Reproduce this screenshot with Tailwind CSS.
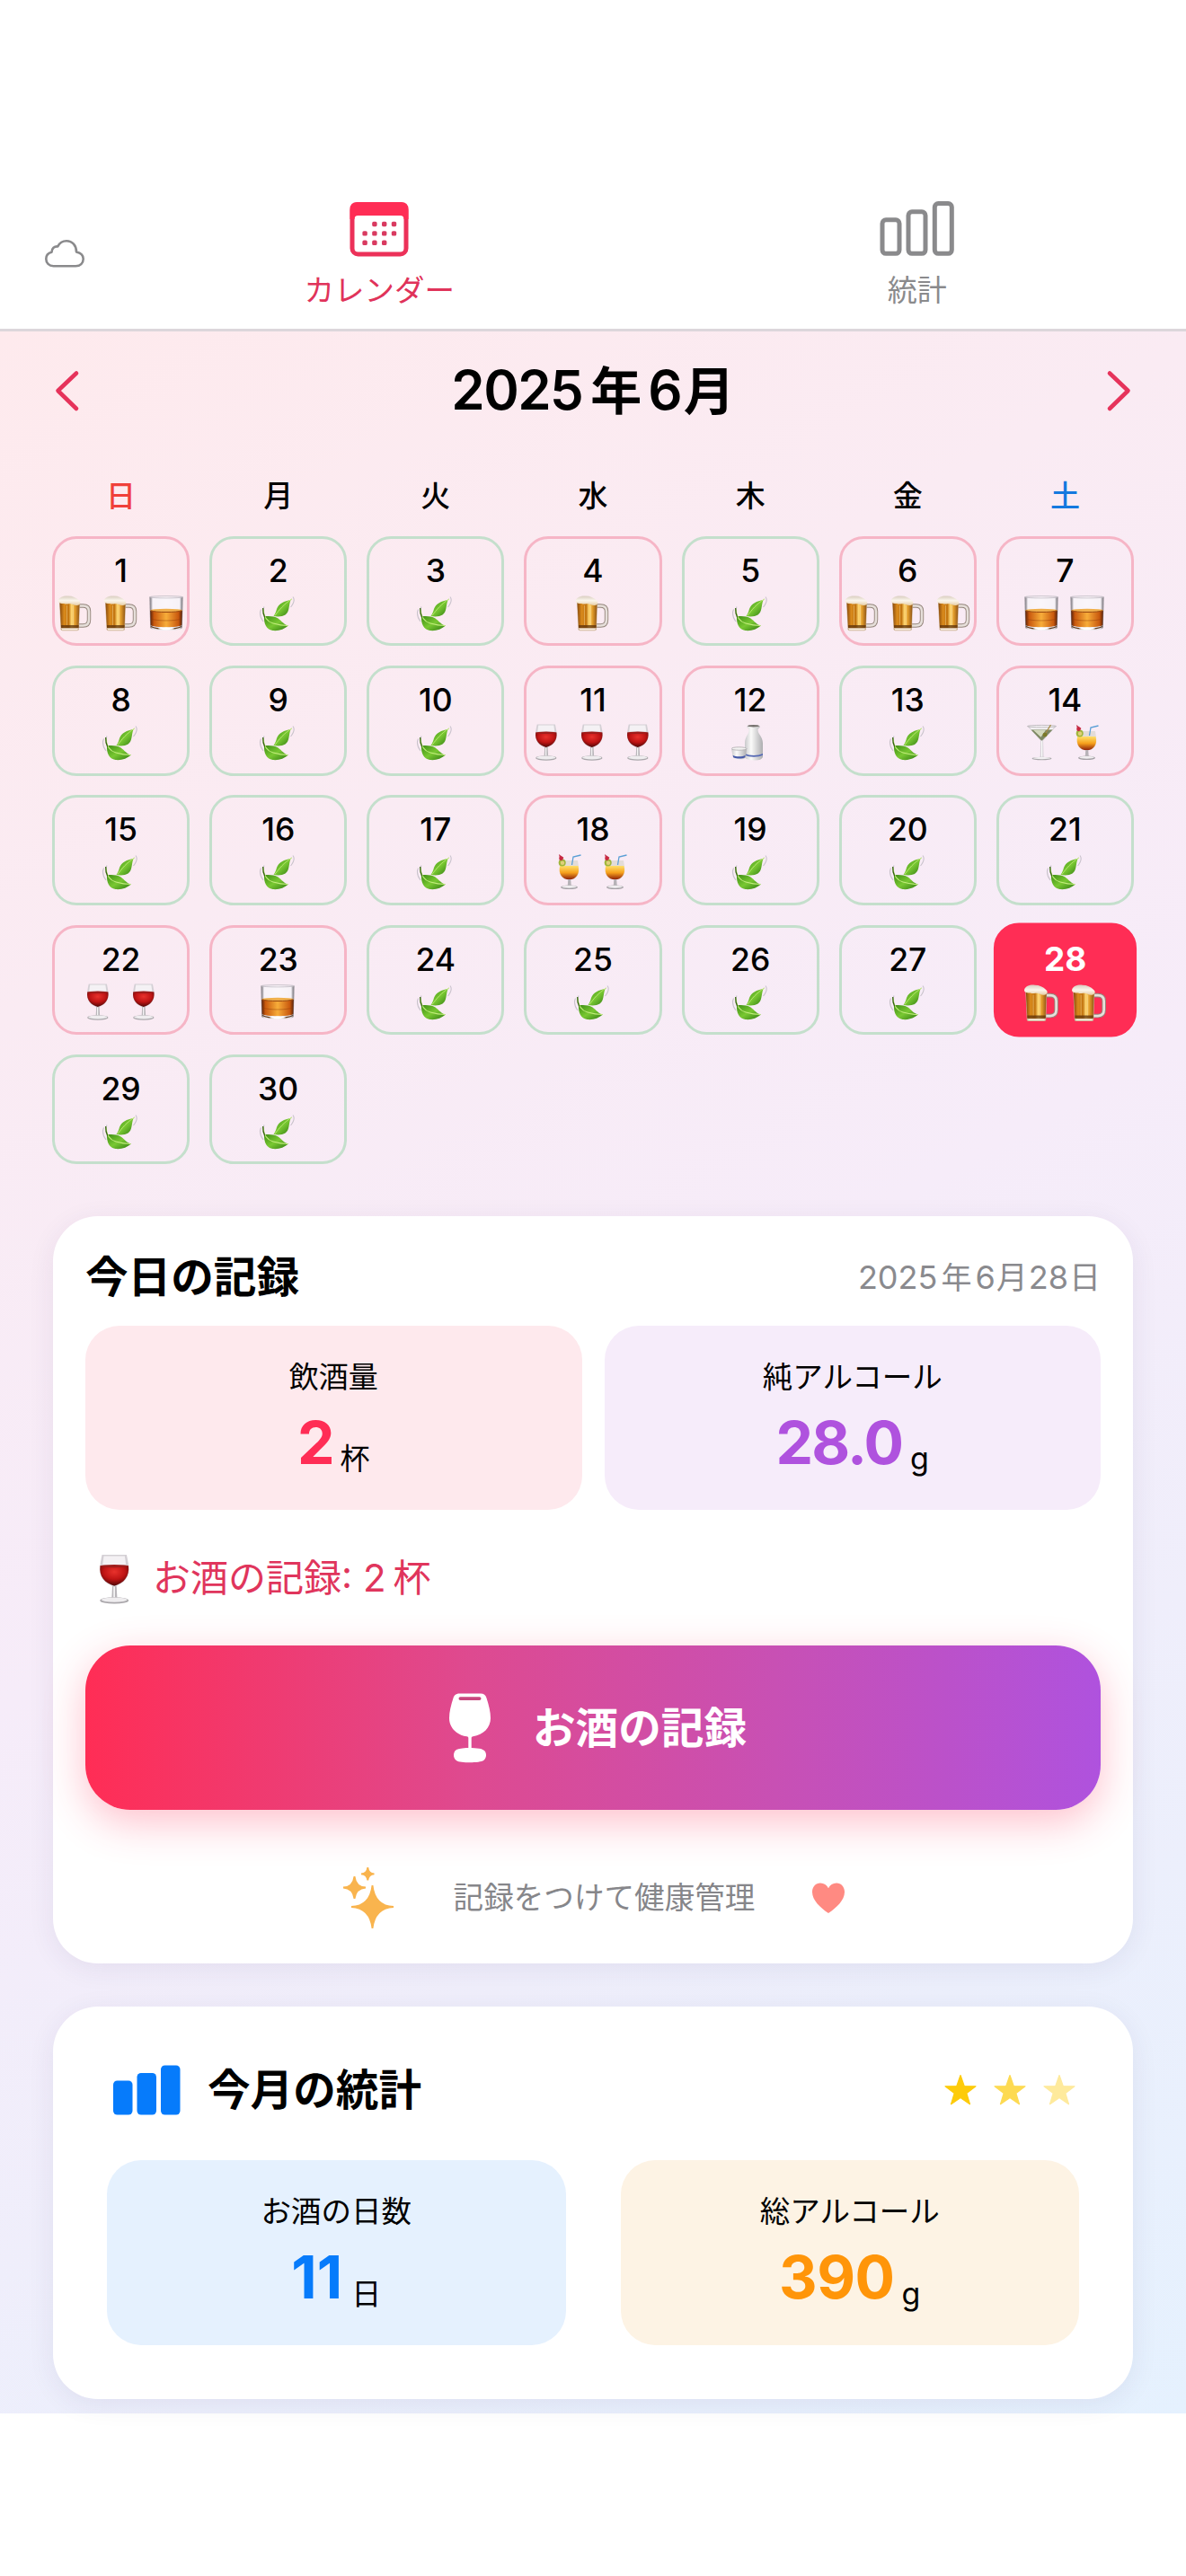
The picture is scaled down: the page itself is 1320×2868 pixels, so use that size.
<!DOCTYPE html>
<html lang="ja">
<head>
<meta charset="utf-8">
<title>カレンダー</title>
<script src="https://cdn.jsdelivr.net/npm/@tailwindcss/browser@4"></script>
</head>
<body class="bg-white">
<svg width="0" height="0" class="absolute" aria-hidden="true">
  <defs>
    <linearGradient id="beerG" x1="0" x2="1" y1="0" y2="0"><stop offset="0" stop-color="#8a4a0c"/><stop offset=".22" stop-color="#d98a1c"/><stop offset=".45" stop-color="#c2740f"/><stop offset=".6" stop-color="#ffd873"/><stop offset=".78" stop-color="#e09a2a"/><stop offset="1" stop-color="#8e5415"/></linearGradient>
    <linearGradient id="foamG" x1="0" x2="0" y1="0" y2="1"><stop offset="0" stop-color="#d9cdbf"/><stop offset=".5" stop-color="#fbf6ec"/><stop offset="1" stop-color="#e6cda6"/></linearGradient>
    <linearGradient id="whiskyG" x1="0" x2="1" y1="0" y2="0"><stop offset="0" stop-color="#5a2008"/><stop offset=".12" stop-color="#c9590e"/><stop offset=".5" stop-color="#f7ad3a"/><stop offset=".88" stop-color="#c9590e"/><stop offset="1" stop-color="#5a2008"/></linearGradient>
    <linearGradient id="glassG" x1="0" x2="1" y1="0" y2="0"><stop offset="0" stop-color="#77747a"/><stop offset=".1" stop-color="#e4e0e6"/><stop offset=".5" stop-color="#f7f4f8"/><stop offset=".9" stop-color="#dedae0"/><stop offset="1" stop-color="#77747a"/></linearGradient>
    <radialGradient id="wineG" cx=".5" cy=".3" r=".75"><stop offset="0" stop-color="#e8322c"/><stop offset=".5" stop-color="#bf1414"/><stop offset="1" stop-color="#3a0505"/></radialGradient>
    <linearGradient id="leafG" x1="0" x2="1" y1="0" y2="1"><stop offset="0" stop-color="#3f8f14"/><stop offset=".5" stop-color="#79c832"/><stop offset="1" stop-color="#2f7a12"/></linearGradient>
    <linearGradient id="sakeG" x1="0" x2="1" y1="0" y2="0"><stop offset="0" stop-color="#c9c9cb"/><stop offset=".35" stop-color="#fbfbfa"/><stop offset="1" stop-color="#adadb0"/></linearGradient>
    <linearGradient id="tropicG" x1="0" x2="0" y1="0" y2="1"><stop offset="0" stop-color="#ffe06a"/><stop offset=".5" stop-color="#f6a01c"/><stop offset="1" stop-color="#8c1f0a"/></linearGradient>
  </defs>
  <symbol id="beer" viewBox="0 0 42 42">
    <path d="M26 13.500h4.500c4.500 0 6.500 2 6.500 6v9.500c0 4-2 6.500-6.500 6.500H26" fill="none" stroke="#94857b" stroke-width="4.400"/>
    <path d="M26 13.500h4.500c4.500 0 6.500 2 6.500 6v9.500c0 4-2 6.500-6.500 6.500H26" fill="none" stroke="#e6dfda" stroke-width="2.600"/>
    <path d="M4 9h23L26 39.500q-.2 1.800-2 1.800H7.500q-1.800 0-2-1.800z" fill="#cdb498"/>
    <path d="M4.500 10h22l-1 28H6z" fill="url(#beerG)"/>
    <path d="M6 35h19.600v3H6z" fill="#5e330c" opacity=".75"/>
    <path d="M7 39.700h17.500" stroke="#fff7e8" stroke-width="1.200"/>
    <path d="M12.500 13v22M19.500 13v22" stroke="#fff0c0" stroke-width=".7" opacity=".5"/>
    <path d="M2.800 7.500C4 3.500 9 2 14 2.500c5 0 9 2 12 5 3 2.500.5 5.500-2 5.500-3 .5-5-1.500-7.500-1.800-3.500-.2-5 1-7-.2C6 11 2.500 10.500 2.800 7.500z" fill="url(#foamG)"/>
  </symbol>
  <symbol id="whisky" viewBox="0 0 42 42">
    <path d="M2.500 3.500h37l-.6 34c-.2 2-6 3.500-17.900 3.500S3.300 39.500 3.100 37.500z" fill="url(#glassG)"/>
    <path d="M5.500 4.500h31v14h-31z" fill="#faf6fa" opacity=".85"/>
    <path d="M3.200 18.500h35.600l-.5 16.500c-3 3-31.600 3-34.600 0z" fill="url(#whiskyG)"/>
    <ellipse cx="21" cy="18.600" rx="17.700" ry="1.900" fill="#f0b04c"/>
    <path d="M4 18.800c5 2.300 29 2.300 34 0" stroke="#8c3b0a" stroke-width=".9" fill="none"/>
    <path d="M4 28c7 2.600 27 2.600 34 0" stroke="#8c3b0a" stroke-width=".8" fill="none" opacity=".55"/>
    <path d="M4 36.500c7 3.700 27 3.700 34 0" stroke="#5f3d22" stroke-width="1.400" fill="none"/>
    <ellipse cx="21" cy="38.800" rx="9" ry="1.300" fill="#fff"/>
    <ellipse cx="21" cy="3.700" rx="18.300" ry="1.200" fill="none" stroke="#c3bec5" stroke-width=".8"/>
  </symbol>
  <symbol id="wine" viewBox="0 0 42 42">
    <path d="M10.700 1.500h20.200c.8 4 1.800 8 1.800 12 0 7.500-4.800 12-11.900 14C13.500 25.500 9 21 9 13.500c0-4 .9-8 1.700-12z" fill="#d4d0d5"/>
    <path d="M12.200 2.500h17.200l.9 7H11.200z" fill="#f4f1f4"/>
    <path d="M9.200 10.500h23.200c1.200 8.500-4 14.500-11.600 16.500C13.200 25 7.900 19 9.200 10.500z" fill="url(#wineG)"/>
    <ellipse cx="20.800" cy="10.800" rx="11.500" ry="1.200" fill="#a01d1b"/>
    <path d="M19.200 27h3.400l.6 11h-4.600z" fill="#b9b6ba"/>
    <path d="M20.700 27.500v10" stroke="#fff" stroke-width="1.100"/>
    <ellipse cx="20.800" cy="39" rx="11.700" ry="2.700" fill="#aaa7ab"/>
    <ellipse cx="20.800" cy="38.400" rx="10.600" ry="2" fill="#efedef"/>
  </symbol>
  <symbol id="leaf" viewBox="0 0 42 42">
    <path d="M38 3.500c2 2.500 1 7-2.500 11.500M2.500 17.500c-1.800 4-.5 9.500 2.500 13.500M6 14.500c-1 2-1 3.500-.5 5.500" fill="none" stroke="#c9c3cc" stroke-width="1.100"/>
    <path d="M35.500 7C28.500 8 22 11 20 17c-.8 2.500-1.300 5-3.500 8 5 1 10 .5 13-1.500 5-3.500 3.500-9.500 6-16.500z" fill="url(#leafG)"/>
    <path d="M18 24.300c5-6.500 9.500-12.500 19-18.500" fill="none" stroke="#b7e572" stroke-width="1"/>
    <path d="M6 25.500C10.500 24.500 17 25 21.500 27.500c4 2.800 7 7.500 11.500 8-4.500 4-11 6.300-17.500 5.500C8.500 40 5.500 33 6 25.500z" fill="url(#leafG)"/>
    <path d="M5 17.500c.5 7 3.500 13.500 11 15.500 5 1.500 10 2.500 16.500 2.500" fill="none" stroke="#c2ec7c" stroke-width="1.100"/>
    <path d="M4.700 16c-.2 4 .5 7.500 2 10.500" fill="none" stroke="#35650f" stroke-width="1.300"/>
  </symbol>
  <symbol id="sake" viewBox="0 0 42 42">
    <path d="M17 3.500q7.500-2.500 15 0c.5 1.500-2.500 2.500-2.500 4 0 5 5.500 7.500 5.500 15v15.500q-2 4-10 3.500-8-.5-10-3V22.500C15 15 19.700 12.500 19.700 7.500c0-1.500-3-2.500-2.700-4z" fill="url(#sakeG)"/>
    <ellipse cx="24.500" cy="3.200" rx="6.500" ry="1.300" fill="#77726f"/>
    <path d="M15 34c5 2.500 15 2.500 20 0v1.800c-5 2.500-15 2.500-20 0z" fill="#5468b4"/>
    <path d="M0 28.500h17l-1.200 9.500q-1 2.500-7 2.500t-7-2.500z" fill="url(#sakeG)"/>
    <ellipse cx="8.500" cy="28.500" rx="8.400" ry="1.700" fill="#f4f3f2" stroke="#a3a0a3" stroke-width=".7"/>
    <path d="M1.600 35.800c3 2 11 2 14 0l-.4 2.400c-3 1.800-10 1.800-13 0z" fill="#4559a8"/>
  </symbol>
  <symbol id="martini" viewBox="0 0 42 42">
    <path d="M5.500 3.500h32L23 19.500l.5 19h-3.800l.5-19z" fill="#d3cfd4"/>
    <path d="M7.500 4h28L33 7.500H10z" fill="#f4f1f4"/>
    <path d="M9.500 7.500h24L22 19.200h-1.200z" fill="#7d8762"/>
    <path d="M12 7.800H26l-5.500 8z" fill="#d3d8bd"/>
    <ellipse cx="21.500" cy="3.600" rx="16" ry="1.200" fill="#f5f3f5" stroke="#aaa6ab" stroke-width=".7"/>
    <path d="M31.500 2l-8 13" stroke="#a68a43" stroke-width="1.300"/>
    <ellipse cx="25" cy="13" rx="2.500" ry="2.200" fill="#7b7a28"/>
    <path d="M21.600 20v18" stroke="#fff" stroke-width="1.200"/>
    <ellipse cx="21.500" cy="39.500" rx="11" ry="1.800" fill="#aaa7ab"/><ellipse cx="21.500" cy="39" rx="9.700" ry="1.200" fill="#f2f0f2"/>
  </symbol>
  <symbol id="tropical" viewBox="0 0 42 42">
    <path d="M10.500 9H30c.5 4 1.300 7 1.300 11 0 6.500-4.300 10.500-10.800 10.500S9.700 26.500 9.700 20c0-4 .4-7 .8-11z" fill="#e3dcd8"/>
    <path d="M10.200 15h20.300c2.200 9-2.500 15.300-10 15.300S8 24 10.200 15z" fill="url(#tropicG)"/>
    <path d="M19.300 30h2.900l.5 7h-3.900z" fill="#b6b2b7"/>
    <ellipse cx="20.500" cy="38.800" rx="9.500" ry="2.300" fill="#a5a1a6"/><ellipse cx="20.500" cy="38.300" rx="8.200" ry="1.500" fill="#f0eef0"/>
    <path d="M23.500 14l1.500-9 8.500-2" fill="none" stroke="#5a9fd6" stroke-width="1.300"/>
    <circle cx="12.700" cy="11.500" r="4" fill="#9fb63c"/><circle cx="13" cy="11.800" r="2.200" fill="#dfd07a"/>
    <path d="M9 2l5.500 4-4 3z" fill="#c3344d"/><circle cx="11.500" cy="6.800" r="2.300" fill="#c8283f"/>
  </symbol>
</svg>

<div class="flex h-[2868px] w-[1320px] flex-col bg-white font-['Inter','Noto_Sans_CJK_JP',sans-serif] text-black">
  <header class="flex h-[369px] shrink-0 border-b-[3px] border-[#dcd6db] pt-[224px]">
    <div class="w-[123px] pt-[41px] pl-[48px]">
      <svg width="48" height="34" viewBox="0 0 48 34" fill="none" stroke="#8a8a8c" stroke-width="2.600" stroke-linejoin="round"><path d="M11.500 31.200C6.500 31.200 3.300 27.800 3.300 23.300c0-4 2.400-6.800 6.200-7.600C9.700 11.500 12.500 9 16.300 9.400 18.300 5.500 21.800 3.300 26 3.300c6.500 0 11 5 11 12.200 4.800 1 7.700 3.800 7.700 7.800 0 4.700-3.400 7.900-8.500 7.900z"/></svg>
    </div>
    <div class="flex flex-1 flex-col items-center text-[#e0335a]">
      <svg width="66" height="62" viewBox="0 0 66 62">
        <rect x="3" y="3.500" width="60" height="55.500" rx="6.500" fill="#fff" stroke="#ec3159" stroke-width="5"/>
        <path d="M.5 20V9q0-8 8-8h49q8 0 8 8v11h-5q0-4-4-4h-47q-4 0-4 4z" fill="#ff2d55"/>
        <g fill="#d93a60"><rect x="25.200" y="22.800" width="5.400" height="5.400" rx="1.600"/><rect x="36" y="22.800" width="5.400" height="5.400" rx="1.600"/><rect x="46.800" y="22.800" width="5.400" height="5.400" rx="1.600"/><rect x="14.400" y="33.200" width="5.400" height="5.400" rx="1.600"/><rect x="25.200" y="33.200" width="5.400" height="5.400" rx="1.600"/><rect x="36" y="33.200" width="5.400" height="5.400" rx="1.600"/><rect x="46.800" y="33.200" width="5.400" height="5.400" rx="1.600"/><rect x="14.400" y="43.600" width="5.400" height="5.400" rx="1.600"/><rect x="25.200" y="43.600" width="5.400" height="5.400" rx="1.600"/><rect x="36" y="43.600" width="5.400" height="5.400" rx="1.600"/></g>
      </svg>
      <span class="mt-[12px] text-[33.500px] leading-[50px]">カレンダー</span>
    </div>
    <div class="flex flex-1 flex-col items-center text-[#8a8a8c]">
      <svg width="84" height="62" viewBox="0 0 84 62" fill="none" stroke="#8a8a8c" stroke-width="5"><rect x="3" y="20.800" width="19" height="37.500" rx="4"/><rect x="32" y="11.800" width="19" height="46.500" rx="4"/><rect x="61.300" y="2.500" width="19" height="55.800" rx="4"/></svg>
      <span class="mt-[12px] text-[33px] leading-[50px]">統計</span>
    </div>
  </header>

  <main class="h-[2318px] shrink-0 bg-[linear-gradient(150.4deg,#feeaed_0%,#f6ecf9_50%,#e5f1fe_100%)] px-[59px]">
    <div class="flex h-[132px] items-center justify-between">
      <svg width="32" height="50" viewBox="0 0 32 50" fill="none" stroke="#e6335b" stroke-width="4.600" stroke-linecap="round" stroke-linejoin="round"><path d="M26 5.500L5.500 25 26 45"/></svg>
      <h1 class="text-[60px] leading-[80px] font-semibold"><span class="tracking-[-1.500px]">2025</span><span class="mr-[7px] ml-[9px] text-[57px]">年</span>6<span class="ml-[1px] text-[57px]">月</span></h1>
      <svg width="32" height="50" viewBox="0 0 32 50" fill="none" stroke="#e6335b" stroke-width="4.600" stroke-linecap="round" stroke-linejoin="round"><path d="M6 5.500L26.500 25 6 45"/></svg>
    </div>
    <div class="-mx-px grid h-[96px] grid-cols-7 gap-x-[22px] pt-[26px] text-center text-[33px] leading-[50px] font-medium">
      <span class="text-[#f0403a]">日</span><span>月</span><span>火</span><span>水</span><span>木</span><span>金</span><span class="text-[#1479df]">土</span>
    </div>
    <div id="days" class="-mx-px grid h-[757px] auto-rows-[122.4px] grid-cols-7 gap-x-[22px] gap-y-[21.800px]"></div>

    <section class="flex h-[832px] flex-col rounded-[50px] bg-white px-[36px] pt-[36px] shadow-[0_6px_30px_rgba(60,40,90,0.075)]">
      <div class="flex h-[64px] items-center justify-between">
        <h2 class="text-[47.600px] leading-[62px] font-bold">今日の記録</h2>
        <span class="text-[36px] leading-[62px] text-[#8a8a8e]">2025<span class="mx-[4px] text-[34px]">年</span>6<span class="mx-[1px] text-[35px]">月</span>28<span class="ml-[1px] text-[35px]">日</span></span>
      </div>
      <div class="mt-[22px] grid h-[205px] shrink-0 grid-cols-2 gap-[25px]">
        <div class="flex flex-col items-center rounded-[38px] bg-[#fee9ed] pt-[32px]">
          <span class="text-[33px] leading-[50px]">飲酒量</span>
          <div class="flex gap-[8px]"><b class="text-[66px] leading-[96px] font-bold tracking-[-2px] text-[#ff2d55]">2</b><span class="pt-[41px] text-[33px] leading-[50px]">杯</span></div>
        </div>
        <div class="flex flex-col items-center rounded-[38px] bg-[#f6ecfa] pt-[32px]">
          <span class="text-[33.500px] leading-[50px]">純アルコール</span>
          <div class="flex gap-[9px]"><b class="text-[66px] leading-[96px] font-bold tracking-[-1.800px] text-[#af52de]">28.0</b><span class="pt-[41px] text-[34px] leading-[50px]">g</span></div>
        </div>
      </div>
      <div class="mt-[46px] flex h-[60px] items-center pl-[4px]">
        <svg width="57" height="57" viewBox="0 0 42 42"><use href="#wine"/></svg>
        <span class="ml-[14px] text-[42px] leading-[60px] text-[#e0355c]">お酒の記録: 2<span class="ml-[8px]">杯</span></span>
      </div>
      <button class="mt-[45px] flex h-[183px] shrink-0 items-center justify-center gap-[45px] rounded-[50px] bg-[linear-gradient(90deg,#ff2d55_0%,#de4a90_38%,#c850b4_68%,#af52de_100%)] pl-[9px] text-white shadow-[0_14px_46px_rgba(255,45,85,0.300)]">
        <svg width="50" height="80" viewBox="0 0 50 80"><path d="M13 1.500h24q5 0 6.500 5C46 14 48 22 48 29c0 10.500-8 18.500-19.500 20.200-1.500.3-1.800.8-1.800 1.800v11c9.300.4 13.500 1 15.500 4.500 1.500 3 1 7-2 9.500-4 3-26.400 3-30.400 0-3-2.500-3.500-6.500-2-9.500 2-3.500 6.200-4.100 15.500-4.500V51c0-1-.3-1.500-1.800-1.800C10 47.500 2 39.500 2 29 2 22 4 14 6.500 6.500 8 1.500 13 1.500 13 1.500z" fill="#fff"/><rect x="12.500" y="5.200" width="25" height="3.800" rx="1.900" fill="#c9477f"/></svg>
        <span class="text-[47.600px] leading-[70px] font-bold">お酒の記録</span>
      </button>
      <div class="mt-[60px] flex h-[76px] items-center justify-center pl-[2px] text-[#86868a]">
        <svg class="mr-[66px]" width="58" height="70" viewBox="0 0 58 70" fill="#f9b44e"><path d="M33.500 21Q36 44 57 45 36 46 33.500 69 31 46 10 45 31 44 33.500 21zM13.500 11Q15 23 26 23.500 15 24 13.500 36 12 24 1 23.500 12 23 13.500 11zM28.300 1Q29 8 35.500 8.300 29 8.600 28.300 15.500 27.600 8.600 21 8.300 27.600 8 28.300 1z" stroke="#f9b44e" stroke-width="1.800"/></svg>
        <span class="text-[33.600px] leading-[50px]">記録をつけて健康管理</span>
        <svg class="ml-[63px]" width="38" height="36" viewBox="0 0 38 36"><path d="M19 35C10 29 1 20.500 1 11.500 1 5.500 5 1.500 10 1.500c4 0 7.200 2.200 9 5.800 1.800-3.600 5-5.800 9-5.800 5 0 9 4 9 10C37 20.500 28 29 19 35z" fill="#ff8a82"/></svg>
      </div>
    </section>

    <section class="mt-[48px] h-[437px] rounded-[50px] bg-white px-[60px] pt-[61px] shadow-[0_6px_30px_rgba(60,40,90,0.075)]">
      <div class="flex h-[64px] items-center pr-[3px] pl-[6px]">
        <svg width="78" height="58" viewBox="0 0 78 58" fill="#067bfb"><rect x="1" y="18.500" width="21.500" height="38" rx="4.500"/><rect x="27.500" y="10" width="21.500" height="46.500" rx="4.500"/><rect x="54" y="1.500" width="21.500" height="55" rx="4.500"/></svg>
        <h2 class="ml-[28px] text-[47.600px] leading-[62px] font-bold">今月の統計</h2>
        <div class="ml-auto flex gap-[17px]">
          <svg width="38" height="36" viewBox="0 0 38 36"><path id="star" d="M19 1.500l4.200 12 12.800.3-10.200 7.700 3.700 12.200L19 26.500 8.500 33.700 12.200 21.500 2 13.800l12.800-.3z" fill="#fdcb0a" stroke="#fdcb0a" stroke-width="1.200" stroke-linejoin="round"/></svg>
          <svg class="opacity-70" width="38" height="36" viewBox="0 0 38 36"><use href="#star"/></svg>
          <svg class="opacity-40" width="38" height="36" viewBox="0 0 38 36"><use href="#star"/></svg>
        </div>
      </div>
      <div class="mt-[46px] grid h-[206px] grid-cols-2 gap-[61px]">
        <div class="flex flex-col items-center rounded-[38px] bg-[#e5f1fe] pt-[32px]">
          <span class="text-[33.500px] leading-[50px]">お酒の日数</span>
          <div class="flex gap-[10px]"><b class="text-[66px] leading-[96px] font-bold text-[#067bfb]">11</b><span class="pt-[42px] text-[33px] leading-[50px]">日</span></div>
        </div>
        <div class="flex flex-col items-center rounded-[38px] bg-[#fdf3e4] pt-[32px]">
          <span class="text-[33.500px] leading-[50px]">総アルコール</span>
          <div class="flex gap-[8px]"><b class="text-[66px] leading-[96px] font-bold tracking-[-0.500px] text-[#ff9509]">390</b><span class="pt-[42px] text-[34px] leading-[50px]">g</span></div>
        </div>
      </div>
    </section>
  </main>
</div>
<script>
  const drinks = {1:['beer','beer','whisky'],4:['beer'],6:['beer','beer','beer'],7:['whisky','whisky'],11:['wine','wine','wine'],12:['sake'],14:['martini','tropical'],18:['tropical','tropical'],22:['wine','wine'],23:['whisky'],28:['beer','beer']};
  const base = 'flex flex-col items-center rounded-[27px] border-[3px] pt-[14px]';
  const today = 'flex flex-col items-center rounded-[27px] border-[3px] border-[#ff2d55] bg-[#ff2d55] pt-[14px] scale-[1.040] text-white font-bold';
  let html = '';
  for (let d = 1; d <= 30; d++) {
    const icons = drinks[d] || ['leaf'];
    const cls = d === 28 ? today : base + (drinks[d] ? ' border-[#f6b5c6] font-medium' : ' border-[#c4dfcc] font-medium');
    html += `<div class="${cls}"><span class="text-[35.500px] leading-[44px]">${d}</span><span class="mt-[3px] flex gap-[9px] pr-[1px]">${icons.map(i => `<svg width="42" height="42"><use href="#${i}"/></svg>`).join('')}</span></div>`;
  }
  document.getElementById('days').innerHTML = html;
</script>
</body>
</html>
